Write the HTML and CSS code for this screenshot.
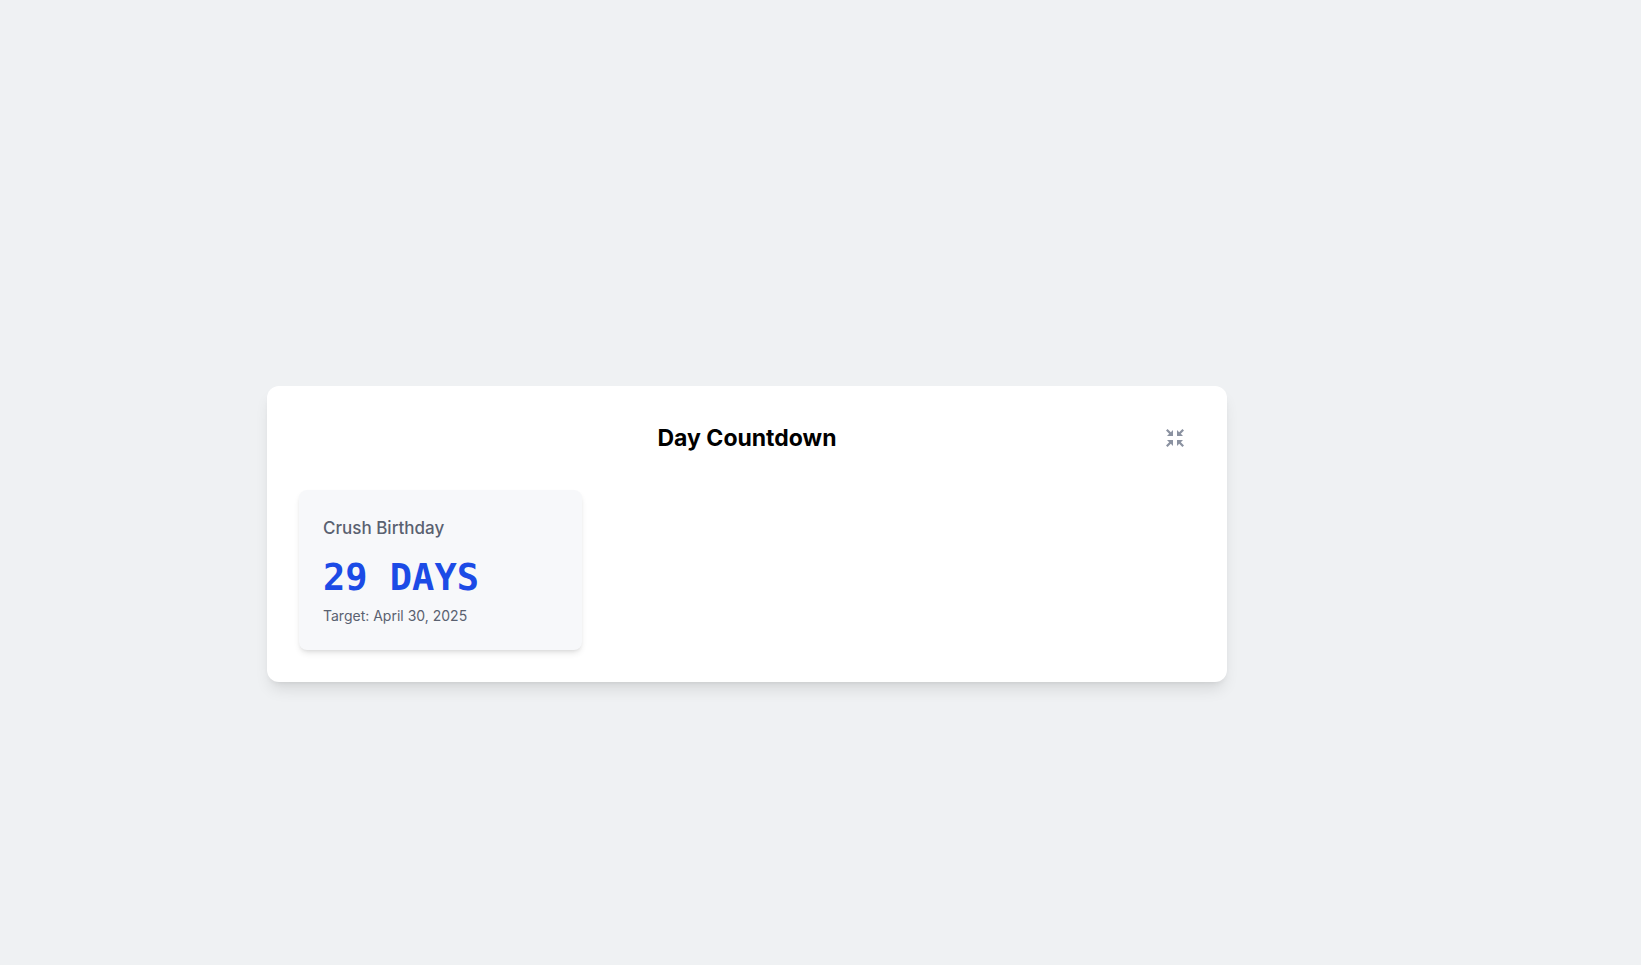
FILE: index.html
```html
<!DOCTYPE html>
<html lang="en">
<head>
    <meta charset="UTF-8">
    <meta name="viewport" content="width=device-width, initial-scale=1.0">
    <title>Day Countdown</title>
    <link rel="stylesheet" href="styles.css">
</head>
<body>
    <main class="page">
        <section class="panel">
            <header class="panel-header">
                <h1>Day Countdown</h1>
                <button type="button" class="icon-button" aria-label="Exit full screen">
                    <svg viewBox="0 0 24 24" width="24" height="24" fill="currentColor" aria-hidden="true">
                        <path d="M10 10H4l2.200-2.200L3 4.600 4.600 3l3.200 3.200L10 4z"/>
                        <path d="M14 10h6l-2.200-2.200L21 4.600 19.400 3l-3.200 3.200L14 4z"/>
                        <path d="M10 14H4l2.200 2.200L3 19.400 4.600 21l3.200-3.200L10 20z"/>
                        <path d="M14 14h6l-2.200 2.200L21 19.400 19.400 21l-3.200-3.200L14 20z"/>
                    </svg>
                </button>
            </header>

            <div class="countdowns">
                <article class="countdown">
                    <h2>Crush Birthday</h2>
                    <p class="days">29 DAYS</p>
                    <p class="target">Target: April 30, 2025</p>
                </article>
            </div>
        </section>
    </main>
</body>
</html>
```
FILE: styles.css
```css
* {
    box-sizing: border-box;
}
body {
    margin: 0;
    font-family: Inter, "Liberation Sans", sans-serif;
    background-color: #eff1f3;
    color: #000;
}
h1, h2, p {
    margin: 0;
}
.page {
    display: flex;
    align-items: center;
    justify-content: center;
    min-height: 100vh;
    padding: 102px 147px 0 0;
}
.panel {
    width: 100%;
    max-width: 960px;
    padding: 32px;
    background-color: #fff;
    border-radius: 12px;
    box-shadow: 0 10px 15px -3px rgba(0, 0, 0, 0.1), 0 4px 6px -4px rgba(0, 0, 0, 0.1);
}
.panel-header {
    display: grid;
    grid-template-columns: 40px 1fr 40px;
    align-items: center;
    margin-bottom: 32px;
}
.panel-header h1 {
    grid-column: 2;
    font-size: 23px;
    line-height: 32px;
    font-weight: 700;
    text-align: center;
}
.icon-button {
    display: flex;
    padding: 8px;
    border: none;
    background: none;
    color: #8b92a1;
    cursor: pointer;
}
.icon-button:hover {
    color: #5a6170;
}
.countdowns {
    display: grid;
    grid-template-columns: repeat(3, 1fr);
    gap: 24px;
}
.countdown {
    padding: 24px;
    background-color: #f7f8fa;
    border-radius: 8px;
    box-shadow: 0 4px 6px -1px rgba(0, 0, 0, 0.1), 0 2px 4px -2px rgba(0, 0, 0, 0.1);
    color: #5a6170;
}
.countdown h2 {
    font-size: 17px;
    line-height: 28px;
    font-weight: 500;
}
.days {
    margin: 12px 0 4px;
    font-family: "DejaVu Sans Mono", monospace;
    font-size: 37px;
    line-height: 48px;
    font-weight: 700;
    color: #1c4be6;
}
.target {
    font-size: 14px;
    line-height: 20px;
}
```
